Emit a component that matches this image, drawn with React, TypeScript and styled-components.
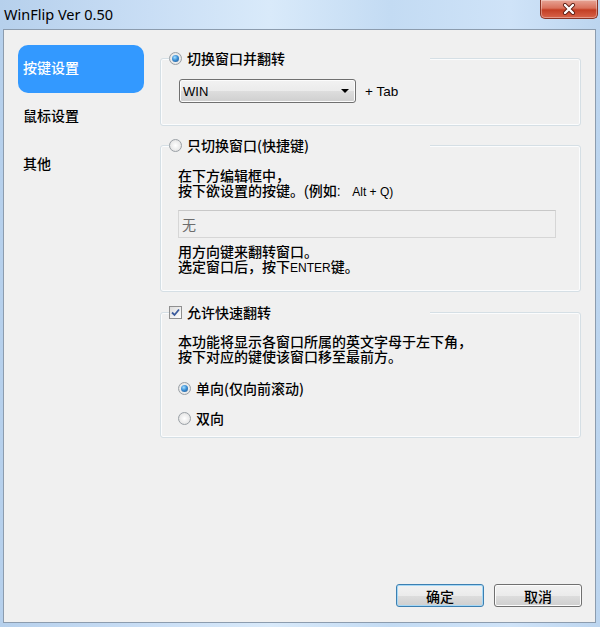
import React from "react";
import styled, { createGlobalStyle, css } from "styled-components";

const Global = createGlobalStyle`
  html, body { margin: 0; padding: 0; }
  body { width: 600px; height: 627px; overflow: hidden; font-family: "Liberation Sans", "Noto Sans CJK SC", sans-serif; }
`;

const Window = styled.div`
  width: 600px;
  height: 627px;
  display: flex;
  flex-direction: column;
  background: linear-gradient(90deg, #b6d0ec 0%, #c9def5 25%, #d9eafa 45%, #c3dbf3 65%, #cfe3f8 85%, #bcd5ef 100%);
  box-sizing: border-box;
`;

const TitleBar = styled.div`
  height: 29px;
  display: flex;
  justify-content: space-between;
  align-items: flex-start;
  flex-shrink: 0;
`;

const Title = styled.div`
  font-family: "Noto Sans", "Open Sans", sans-serif;
  font-size: 14.5px;
  color: #000;
  margin: 4px 0 0 4px;
  line-height: 20px;
`;

const CloseBtn = styled.div`
  width: 56px;
  height: 18px;
  margin-right: 2px;
  border: 1px solid #8a3324;
  border-top: none;
  border-radius: 0 0 5px 5px;
  background: linear-gradient(180deg, #e7a496 0%, #d9715c 45%, #c33e24 55%, #d8644a 100%);
  display: flex;
  align-items: center;
  justify-content: center;
  box-shadow: inset 0 0 0 1px rgba(255,255,255,0.35);
`;

const Client = styled.div`
  flex: 1;
  margin: 0 4px 4px 3px;
  border: 1px solid #8c9cae;
  background: #f0f0f0;
  display: flex;
  min-height: 0;
`;

const Sidebar = styled.div`
  width: 156px;
  flex-shrink: 0;
  padding: 15px 0 0 14px;
  box-sizing: border-box;
  display: flex;
  flex-direction: column;
`;

const NavItem = styled.div<{ $active?: boolean }>`
  width: 126px;
  height: 48px;
  border-radius: 10px;
  box-sizing: border-box;
  padding: 0 0 5px 5px;
  display: flex;
  align-items: center;
  font-family: "Noto Sans CJK SC", sans-serif;
  font-size: 14px;
  font-weight: 500;
  color: #000;
  ${(p) =>
    p.$active &&
    css`
      background: #3399ff;
      color: #fff;
    `}
`;

const Main = styled.div`
  flex: 1;
  display: flex;
  flex-direction: column;
  padding: 0 13px 15px 0;
  min-width: 0;
`;

const Group = styled.div<{ $top: number }>`
  margin-top: ${(p) => p.$top}px;
  border: 1px solid #d5dfe5;
  border-radius: 3px;
  box-shadow: inset 0 0 0 1px #fbfcfd;
  display: flex;
  flex-direction: column;
  margin-right: 1px;
`;

const GroupHeader = styled.div`
  margin: -9px 0 0 8px;
  height: 16px;
  width: 261px;
  background: #f0f0f0;
  display: flex;
  align-items: center;
  gap: 5px;
  font-family: "Noto Sans CJK SC", sans-serif;
  font-size: 14px;
  font-weight: 500;
  color: #000;
  line-height: 16px;
`;

const GroupBody = styled.div<{ $pad: string }>`
  padding: ${(p) => p.$pad};
  display: flex;
  flex-direction: column;
`;

const RadioCircle = styled.span<{ $checked?: boolean }>`
  width: 13px;
  height: 13px;
  border-radius: 50%;
  box-sizing: border-box;
  border: 1px solid #9aa0a6;
  background: radial-gradient(circle at 50% 50%, #ffffff 0%, #eaeaea 60%, #d3d3d3 100%);
  display: inline-flex;
  align-items: center;
  justify-content: center;
  flex-shrink: 0;
  &::after {
    content: "";
    width: 7px;
    height: 7px;
    border-radius: 50%;
    display: ${(p) => (p.$checked ? "block" : "none")};
    background: radial-gradient(circle at 40% 35%, #a6e0ff 0%, #3c8fd6 45%, #1c4f85 100%);
  }
`;

const CheckBox = styled.span`
  width: 13px;
  height: 13px;
  box-sizing: border-box;
  border: 1px solid #8f8f8f;
  background: linear-gradient(135deg, #dcdcdc, #ffffff);
  display: inline-flex;
  align-items: center;
  justify-content: center;
  flex-shrink: 0;
`;

const Row = styled.div<{ $mt?: number; $gap?: number }>`
  display: flex;
  align-items: center;
  margin-top: ${(p) => p.$mt ?? 0}px;
  gap: ${(p) => p.$gap ?? 6}px;
`;

const Select = styled.div`
  width: 177px;
  height: 24px;
  box-sizing: border-box;
  border: 1px solid #707070;
  border-radius: 3px;
  background: linear-gradient(180deg, #f2f2f2 0%, #ebebeb 50%, #dddddd 51%, #cfcfcf 100%);
  box-shadow: inset 0 0 0 1px #fcfcfc;
  display: flex;
  align-items: center;
  justify-content: space-between;
  padding: 0 6px 0 3px;
  font-size: 13px;
  color: #000;
`;

const Arrow = styled.span`
  width: 0;
  height: 0;
  border-left: 4px solid transparent;
  border-right: 4px solid transparent;
  border-top: 4px solid #000;
`;

const PlainText = styled.span`
  font-size: 13.5px;
  color: #000;
`;

const Paragraph = styled.div<{ $mt: number }>`
  margin-top: ${(p) => p.$mt}px;
  font-family: "Liberation Sans", "Noto Sans CJK SC", sans-serif;
  font-size: 14px;
  font-weight: 500;
  line-height: 15px;
  color: #000;
  white-space: pre;
`;

const Line = styled.div``;

const Small = styled.span`
  font-size: 12px;
  font-weight: 400;
`;

const Input = styled.div`
  margin-top: 10px;
  width: 378px;
  height: 28px;
  box-sizing: border-box;
  border: 1px solid #d6d6d6;
  border-top-color: #c8c8c8;
  background: #f0f0f0;
  display: flex;
  align-items: center;
  padding-left: 3px;
  font-family: "Noto Sans CJK SC", sans-serif;
  font-size: 14px;
  color: #6d6d6d;
`;

const OptionLabel = styled.span`
  font-family: "Noto Sans CJK SC", sans-serif;
  font-size: 14px;
  font-weight: 500;
  color: #000;
  line-height: 16px;
`;

const Footer = styled.div`
  margin-top: auto;
  display: flex;
  justify-content: flex-end;
  gap: 10px;
`;

const Button = styled.button<{ $default?: boolean }>`
  width: 88px;
  height: 23px;
  box-sizing: border-box;
  border: 1px solid ${(p) => (p.$default ? "#3c7fb1" : "#707070")};
  border-radius: 3px;
  background: linear-gradient(180deg, #f2f2f2 0%, #ebebeb 50%, #dddddd 51%, #cfcfcf 100%);
  box-shadow: inset 0 0 0 1px ${(p) => (p.$default ? "#a6d8f6" : "#fcfcfc")};
  font-family: "Noto Sans CJK SC", sans-serif;
  font-size: 14px;
  font-weight: 500;
  color: #000;
  padding: 0;
  line-height: 20px;
`;

export default function App() {
  return (
    <>
      <Global />
      <Window>
        <TitleBar>
          <Title>WinFlip Ver 0.50</Title>
          <CloseBtn>
            <svg width="14" height="12" viewBox="0 0 14 12">
              <path d="M3 2 L11 10 M11 2 L3 10" stroke="#5a1a10" strokeWidth="4" strokeLinecap="round" />
              <path d="M3 2 L11 10 M11 2 L3 10" stroke="#ffffff" strokeWidth="2.4" strokeLinecap="round" />
            </svg>
          </CloseBtn>
        </TitleBar>
        <Client>
          <Sidebar>
            <NavItem $active>按键设置</NavItem>
            <NavItem>鼠标设置</NavItem>
            <NavItem>其他</NavItem>
          </Sidebar>
          <Main>
            <Group $top={28}>
              <GroupHeader>
                <RadioCircle $checked />
                <span>切换窗口并翻转</span>
              </GroupHeader>
              <GroupBody $pad="13px 0 22px 18px">
                <Row $gap={9}>
                  <Select>
                    <span>WIN</span>
                    <Arrow />
                  </Select>
                  <PlainText>+ Tab</PlainText>
                </Row>
              </GroupBody>
            </Group>

            <Group $top={19}>
              <GroupHeader>
                <RadioCircle />
                <span>只切换窗口(快捷键)</span>
              </GroupHeader>
              <GroupBody $pad="0 0 15px 17px">
                <Paragraph $mt={16}>
                  <Line>在下方编辑框中，</Line>
                  <Line>
                    {"按下欲设置的按键。(例如:   "}
                    <Small>Alt + Q)</Small>
                  </Line>
                </Paragraph>
                <Input>无</Input>
                <Paragraph $mt={7}>
                  <Line>用方向键来翻转窗口。</Line>
                  <Line>
                    {"选定窗口后，按下"}
                    <Small>ENTER</Small>
                    {"键。"}
                  </Line>
                </Paragraph>
              </GroupBody>
            </Group>

            <Group $top={20}>
              <GroupHeader>
                <CheckBox>
                  <svg width="9" height="9" viewBox="0 0 9 9">
                    <path d="M1 4.5 L3.5 7 L8 1.5" stroke="#3a5a9c" strokeWidth="1.8" fill="none" />
                  </svg>
                </CheckBox>
                <span>允许快速翻转</span>
              </GroupHeader>
              <GroupBody $pad="0 0 11px 17px">
                <Paragraph $mt={15}>
                  <Line>本功能将显示各窗口所属的英文字母于左下角，</Line>
                  <Line>按下对应的键使该窗口移至最前方。</Line>
                </Paragraph>
                <Row $mt={15} $gap={5}>
                  <RadioCircle $checked />
                  <OptionLabel>单向(仅向前滚动)</OptionLabel>
                </Row>
                <Row $mt={14} $gap={5}>
                  <RadioCircle />
                  <OptionLabel>双向</OptionLabel>
                </Row>
              </GroupBody>
            </Group>

            <Footer>
              <Button $default>确定</Button>
              <Button>取消</Button>
            </Footer>
          </Main>
        </Client>
      </Window>
    </>
  );
}
